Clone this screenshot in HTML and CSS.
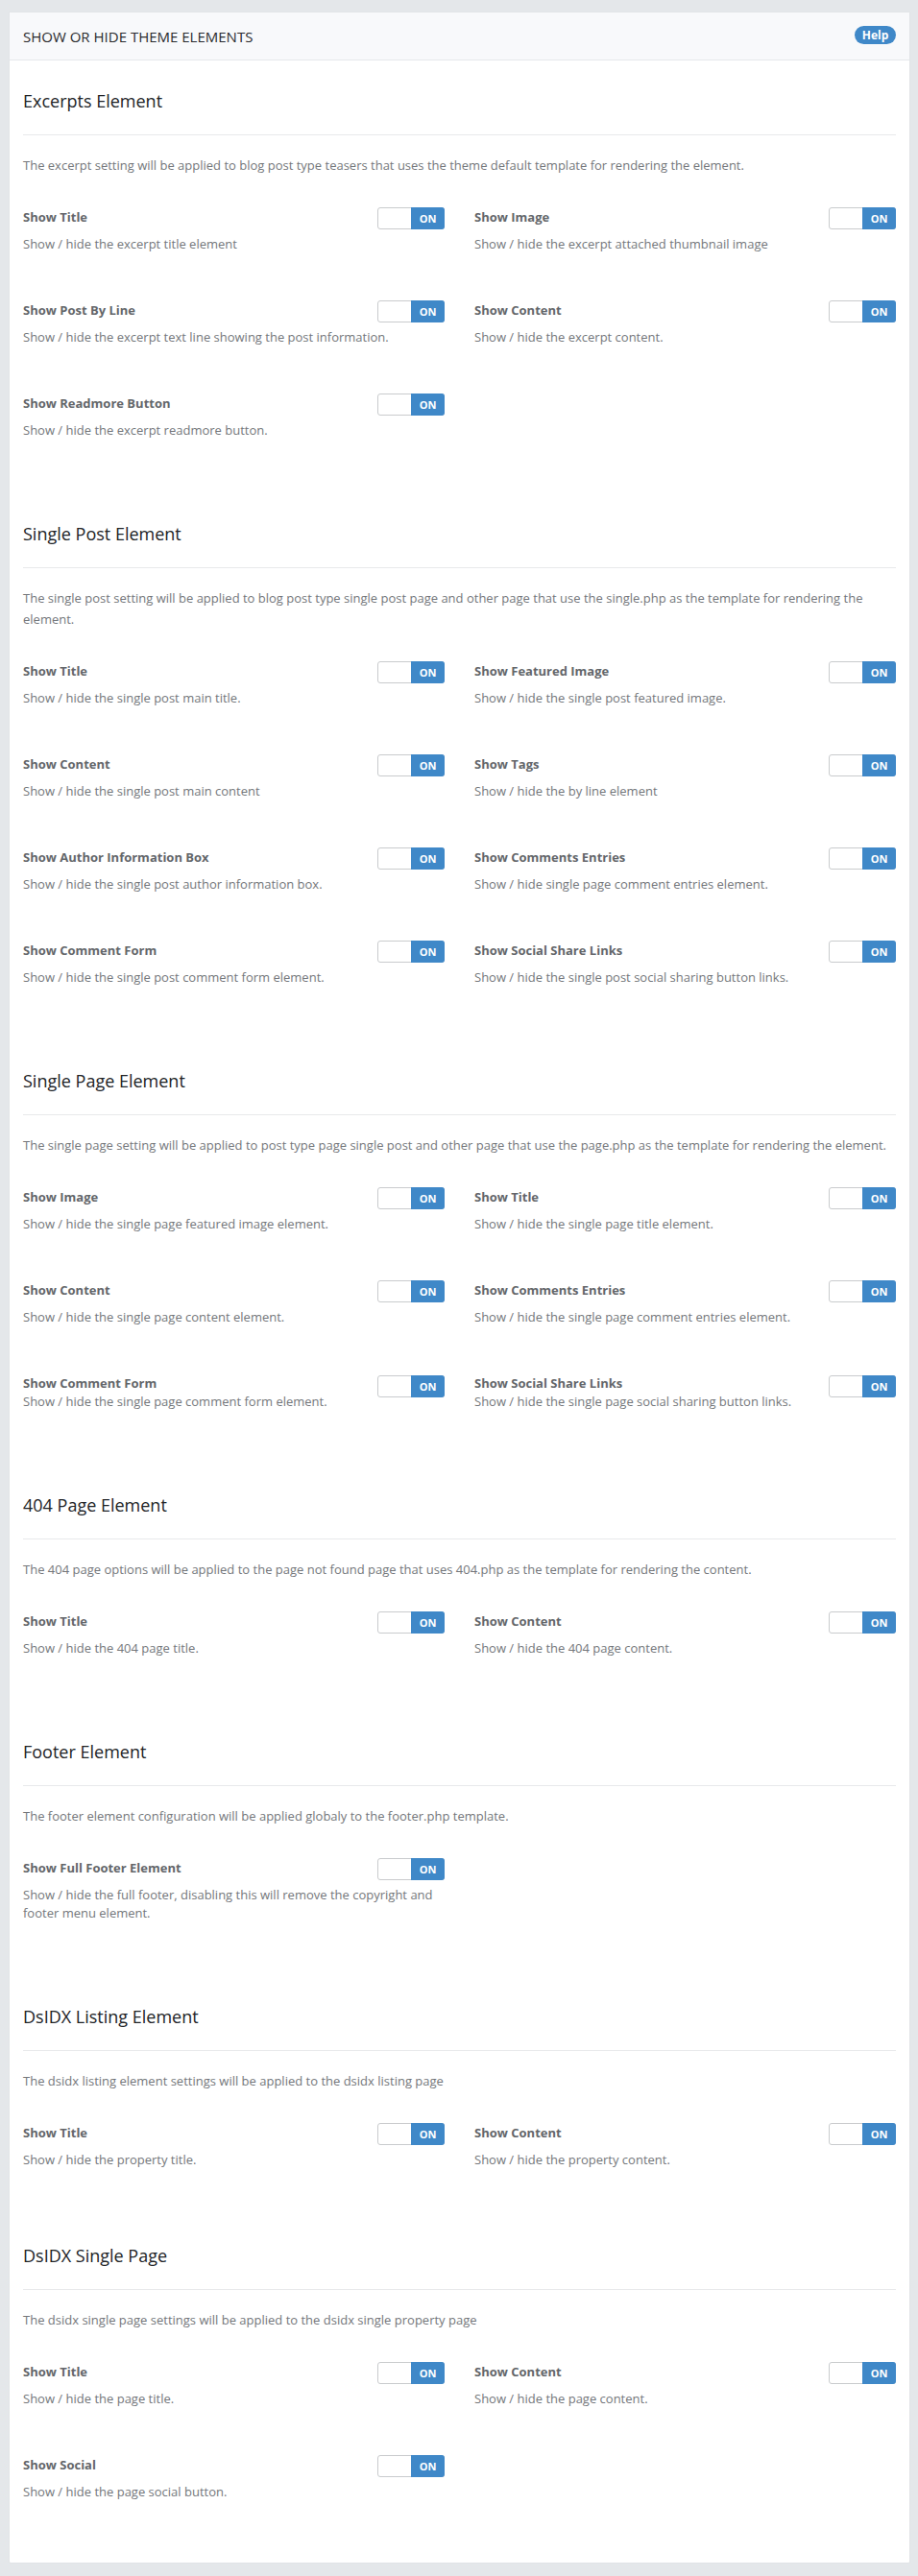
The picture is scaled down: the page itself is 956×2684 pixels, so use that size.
FILE: index.html
```html
<!DOCTYPE html>
<html>
<head>
<meta charset="utf-8">
<link rel="stylesheet" href="styles.css">
</head>
<body>
<div class="page">
  <div class="card">
    <div class="card-head">
      <h1 class="card-title">SHOW OR HIDE THEME ELEMENTS</h1>
      <span class="help">Help</span>
    </div>
    <div class="card-body">

      <section class="section">
        <h2 class="sec-title">Excerpts Element</h2>
        <p class="sec-desc">The excerpt setting will be applied to blog post type teasers that uses the theme default template for rendering the element.</p>
        <div class="grid">
          <div class="opt"><div class="opt-head"><span class="opt-label">Show Title</span><span class="toggle"><span class="on">ON</span></span></div><p class="opt-desc">Show / hide the excerpt title element</p></div>
          <div class="opt"><div class="opt-head"><span class="opt-label">Show Image</span><span class="toggle"><span class="on">ON</span></span></div><p class="opt-desc">Show / hide the excerpt attached thumbnail image</p></div>
          <div class="opt"><div class="opt-head"><span class="opt-label">Show Post By Line</span><span class="toggle"><span class="on">ON</span></span></div><p class="opt-desc">Show / hide the excerpt text line showing the post information.</p></div>
          <div class="opt"><div class="opt-head"><span class="opt-label">Show Content</span><span class="toggle"><span class="on">ON</span></span></div><p class="opt-desc">Show / hide the excerpt content.</p></div>
          <div class="opt"><div class="opt-head"><span class="opt-label">Show Readmore Button</span><span class="toggle"><span class="on">ON</span></span></div><p class="opt-desc">Show / hide the excerpt readmore button.</p></div>
        </div>
      </section>

      <section class="section">
        <h2 class="sec-title">Single Post Element</h2>
        <p class="sec-desc">The single post setting will be applied to blog post type single post page and other page that use the single.php as the template for rendering the element.</p>
        <div class="grid">
          <div class="opt"><div class="opt-head"><span class="opt-label">Show Title</span><span class="toggle"><span class="on">ON</span></span></div><p class="opt-desc">Show / hide the single post main title.</p></div>
          <div class="opt"><div class="opt-head"><span class="opt-label">Show Featured Image</span><span class="toggle"><span class="on">ON</span></span></div><p class="opt-desc">Show / hide the single post featured image.</p></div>
          <div class="opt"><div class="opt-head"><span class="opt-label">Show Content</span><span class="toggle"><span class="on">ON</span></span></div><p class="opt-desc">Show / hide the single post main content</p></div>
          <div class="opt"><div class="opt-head"><span class="opt-label">Show Tags</span><span class="toggle"><span class="on">ON</span></span></div><p class="opt-desc">Show / hide the by line element</p></div>
          <div class="opt"><div class="opt-head"><span class="opt-label">Show Author Information Box</span><span class="toggle"><span class="on">ON</span></span></div><p class="opt-desc">Show / hide the single post author information box.</p></div>
          <div class="opt"><div class="opt-head"><span class="opt-label">Show Comments Entries</span><span class="toggle"><span class="on">ON</span></span></div><p class="opt-desc">Show / hide single page comment entries element.</p></div>
          <div class="opt"><div class="opt-head"><span class="opt-label">Show Comment Form</span><span class="toggle"><span class="on">ON</span></span></div><p class="opt-desc">Show / hide the single post comment form element.</p></div>
          <div class="opt"><div class="opt-head"><span class="opt-label">Show Social Share Links</span><span class="toggle"><span class="on">ON</span></span></div><p class="opt-desc">Show / hide the single post social sharing button links.</p></div>
        </div>
      </section>

      <section class="section">
        <h2 class="sec-title">Single Page Element</h2>
        <p class="sec-desc">The single page setting will be applied to post type page single post and other page that use the page.php as the template for rendering the element.</p>
        <div class="grid">
          <div class="opt"><div class="opt-head"><span class="opt-label">Show Image</span><span class="toggle"><span class="on">ON</span></span></div><p class="opt-desc">Show / hide the single page featured image element.</p></div>
          <div class="opt"><div class="opt-head"><span class="opt-label">Show Title</span><span class="toggle"><span class="on">ON</span></span></div><p class="opt-desc">Show / hide the single page title element.</p></div>
          <div class="opt"><div class="opt-head"><span class="opt-label">Show Content</span><span class="toggle"><span class="on">ON</span></span></div><p class="opt-desc">Show / hide the single page content element.</p></div>
          <div class="opt"><div class="opt-head"><span class="opt-label">Show Comments Entries</span><span class="toggle"><span class="on">ON</span></span></div><p class="opt-desc">Show / hide the single page comment entries element.</p></div>
          <div class="opt opt-tight"><div class="opt-head"><span class="opt-label">Show Comment Form</span><span class="toggle"><span class="on">ON</span></span></div><p class="opt-desc">Show / hide the single page comment form element.</p></div>
          <div class="opt opt-tight"><div class="opt-head"><span class="opt-label">Show Social Share Links</span><span class="toggle"><span class="on">ON</span></span></div><p class="opt-desc">Show / hide the single page social sharing button links.</p></div>
        </div>
      </section>

      <section class="section">
        <h2 class="sec-title">404 Page Element</h2>
        <p class="sec-desc">The 404 page options will be applied to the page not found page that uses 404.php as the template for rendering the content.</p>
        <div class="grid">
          <div class="opt"><div class="opt-head"><span class="opt-label">Show Title</span><span class="toggle"><span class="on">ON</span></span></div><p class="opt-desc">Show / hide the 404 page title.</p></div>
          <div class="opt"><div class="opt-head"><span class="opt-label">Show Content</span><span class="toggle"><span class="on">ON</span></span></div><p class="opt-desc">Show / hide the 404 page content.</p></div>
        </div>
      </section>

      <section class="section">
        <h2 class="sec-title">Footer Element</h2>
        <p class="sec-desc">The footer element configuration will be applied globaly to the footer.php template.</p>
        <div class="grid">
          <div class="opt"><div class="opt-head"><span class="opt-label">Show Full Footer Element</span><span class="toggle"><span class="on">ON</span></span></div><p class="opt-desc">Show / hide the full footer, disabling this will remove the copyright and footer menu element.</p></div>
        </div>
      </section>

      <section class="section section-short">
        <h2 class="sec-title">DsIDX Listing Element</h2>
        <p class="sec-desc">The dsidx listing element settings will be applied to the dsidx listing page</p>
        <div class="grid">
          <div class="opt"><div class="opt-head"><span class="opt-label">Show Title</span><span class="toggle"><span class="on">ON</span></span></div><p class="opt-desc">Show / hide the property title.</p></div>
          <div class="opt"><div class="opt-head"><span class="opt-label">Show Content</span><span class="toggle"><span class="on">ON</span></span></div><p class="opt-desc">Show / hide the property content.</p></div>
        </div>
      </section>

      <section class="section">
        <h2 class="sec-title">DsIDX Single Page</h2>
        <p class="sec-desc">The dsidx single page settings will be applied to the dsidx single property page</p>
        <div class="grid">
          <div class="opt"><div class="opt-head"><span class="opt-label">Show Title</span><span class="toggle"><span class="on">ON</span></span></div><p class="opt-desc">Show / hide the page title.</p></div>
          <div class="opt"><div class="opt-head"><span class="opt-label">Show Content</span><span class="toggle"><span class="on">ON</span></span></div><p class="opt-desc">Show / hide the page content.</p></div>
          <div class="opt"><div class="opt-head"><span class="opt-label">Show Social</span><span class="toggle"><span class="on">ON</span></span></div><p class="opt-desc">Show / hide the page social button.</p></div>
        </div>
      </section>

    </div>
  </div>
</div>
</body>
</html>
```

FILE: styles.css
```css
* { box-sizing: border-box; }
html, body {
  margin: 0;
  padding: 0;
  background: #e4e7ea;
}
body {
  font-family: "Open Sans", "Noto Sans", "Liberation Sans", sans-serif;
  color: #333;
}
.page {
  padding: 12px 8px 14px 9px;
}
.card {
  background: #fff;
  border: 1px solid #e1e4e7;
  border-radius: 2px;
}
.card-head {
  height: 50px;
  background: #f8f9fb;
  border-bottom: 1px solid #e6e8eb;
  display: flex;
  align-items: center;
  justify-content: space-between;
  padding: 0 14px;
}
.card-title {
  margin: 0;
  font-size: 15px;
  font-weight: 500;
  color: #2a2b2e;
  letter-spacing: 0;
}
.help {
  display: inline-flex;
  align-items: center;
  justify-content: center;
  width: 43px;
  height: 19px;
  border-radius: 10px;
  background: #3f88c8;
  color: #fff;
  font-size: 12px;
  font-weight: 700;
  margin-top: -2px;
}
.card-body {
  padding: 0 14px 8px;
}
.section {
  padding: 30px 0 56px;
}
.section-short {
  padding-bottom: 48px;
}
.sec-title {
  margin: 0;
  font-size: 18px;
  line-height: 24px;
  font-weight: 500;
  color: #222427;
  padding-bottom: 23px;
  border-bottom: 1px solid #e8e9eb;
}
.sec-desc {
  margin: 20px 0 0;
  font-size: 13px;
  line-height: 22px;
  color: #74777b;
}
.grid {
  margin-top: 33px;
  display: grid;
  grid-template-columns: 1fr 1fr;
  column-gap: 31px;
  row-gap: 49px;
}
.opt-head {
  display: flex;
  justify-content: space-between;
  align-items: flex-start;
  height: 23px;
}
.opt-label {
  font-size: 13px;
  line-height: 20px;
  font-weight: 700;
  color: #63666a;
}
.toggle {
  display: flex;
  justify-content: flex-end;
  width: 70px;
  height: 23px;
  border: 1px solid #c9cbcd;
  border-radius: 3px;
  background: #fff;
}
.on {
  display: flex;
  align-items: center;
  justify-content: center;
  width: 35px;
  height: 23px;
  margin: -1px -1px -1px 0;
  background: #3f88c8;
  border-radius: 0 3px 3px 0;
  color: #fff;
  font-size: 11px;
  font-weight: 700;
}
.opt-desc {
  margin: 6px 0 0;
  font-size: 13px;
  line-height: 19px;
  color: #74777b;
}
.opt-tight .opt-head {
  height: 20px;
}
.opt-tight .toggle {
  margin-top: 2px;
}
.opt-tight .opt-desc {
  margin-top: 0;
}
```
